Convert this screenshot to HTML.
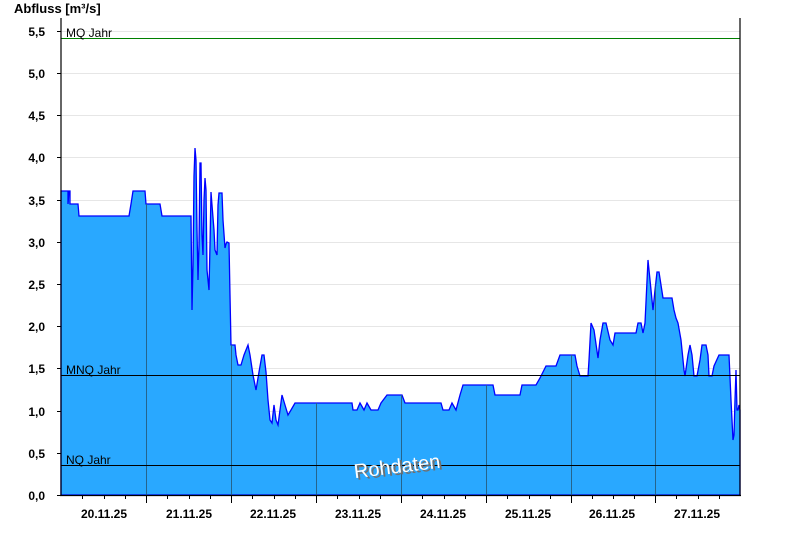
<!DOCTYPE html>
<html><head><meta charset="utf-8"><style>
html,body{margin:0;padding:0;background:#fff;width:800px;height:550px;overflow:hidden}
svg text{font-family:"Liberation Sans",Arial,sans-serif}
</style></head><body>
<svg width="800" height="550" viewBox="0 0 800 550" xmlns="http://www.w3.org/2000/svg">
<defs><clipPath id="c"><polygon id="p0" points="61,191 68,191 68,204 69,191 70,191 70,204 78,204 79,216 129,216 131,204 133,191 145,191 146,204 160,204 162,216 191,216 192,310 193,265 194,176 195,148 196,160 197,230 198,280 199,245 200,163 201,163 202,235 203,255 204,200 205,178 206,190 207,270 209,290 210,245 211,192 212,205 214,230 215,250 217,255 218,205 219,193 222,193 223,220 225,248 226,244 227,242 229,243 230,295 231,345 235,345 236,355 238,365 241,365 244,355 248,345 250,355 253,375 256,390 259,372 262,355 264,355 266,372 268,400 270,420 272,423 274,405 276,420 278,425 280,410 282,395 285,405 288,415 291,410 295,403 352,403 353,410 357,410 360,403 364,410 367,403 371,410 378,410 381,403 387,395 402,395 405,403 441,403 443,410 449,410 452,403 456,410 460,395 463,385 493,385 495,395 520,395 522,385 536,385 540,378 543,372 546,366 556,366 560,355 575,355 577,366 580,376 588,376 589,360 591,323 594,330 598,358 600,340 603,323 606,323 610,340 613,345 615,333 636,333 638,323 641,323 643,333 645,323 648,260 651,290 653,310 655,290 657,272 659,272 661,285 663,298 672,298 674,310 676,318 678,323 681,340 684,370 685,376 688,355 690,345 692,355 694,376 697,376 700,360 702,345 706,345 708,355 709,376 712,376 714,366 719,355 729,355 731,400 733,440 734,435 735,400 736,370 737,410 738,410 739,405 740,410 740,495 61,495"/></clipPath></defs>
<g stroke="#e6e6e6" stroke-width="1">
<line x1="61" y1="31.5" x2="740" y2="31.5"/><line x1="61" y1="73.5" x2="740" y2="73.5"/><line x1="61" y1="115.5" x2="740" y2="115.5"/><line x1="61" y1="157.5" x2="740" y2="157.5"/><line x1="61" y1="200.5" x2="740" y2="200.5"/><line x1="61" y1="242.5" x2="740" y2="242.5"/><line x1="61" y1="284.5" x2="740" y2="284.5"/><line x1="61" y1="326.5" x2="740" y2="326.5"/><line x1="61" y1="368.5" x2="740" y2="368.5"/><line x1="61" y1="411.5" x2="740" y2="411.5"/><line x1="61" y1="453.5" x2="740" y2="453.5"/>
</g>
<use href="#p0" fill="#29a8ff" stroke="#0000ff" stroke-width="1.3"/>
<g clip-path="url(#c)" stroke="#25648c" stroke-width="1">
<line x1="146.5" y1="0" x2="146.5" y2="495"/><line x1="231.5" y1="0" x2="231.5" y2="495"/><line x1="316.5" y1="0" x2="316.5" y2="495"/><line x1="401.5" y1="0" x2="401.5" y2="495"/><line x1="486.5" y1="0" x2="486.5" y2="495"/><line x1="571.5" y1="0" x2="571.5" y2="495"/><line x1="655.5" y1="0" x2="655.5" y2="495"/>
</g>
<line x1="61" y1="38.5" x2="740" y2="38.5" stroke="#008000"/>
<line x1="61" y1="375.5" x2="740" y2="375.5" stroke="#000"/>
<line x1="61" y1="465.5" x2="740" y2="465.5" stroke="#000"/>
<g font-size="12" fill="#000"><text x="66" y="37">MQ Jahr</text><text x="66" y="374">MNQ Jahr</text><text x="66" y="464">NQ Jahr</text></g>
<g stroke="#000" stroke-width="1.2" fill="none">
<line x1="61" y1="18" x2="61" y2="495.5"/><line x1="740" y1="18" x2="740" y2="495.5"/><line x1="60" y1="495.5" x2="741" y2="495.5"/>
</g>
<g stroke="#000" stroke-width="1">
<line x1="57" y1="31.5" x2="61" y2="31.5"/><line x1="57" y1="73.5" x2="61" y2="73.5"/><line x1="57" y1="115.5" x2="61" y2="115.5"/><line x1="57" y1="157.5" x2="61" y2="157.5"/><line x1="57" y1="200.5" x2="61" y2="200.5"/><line x1="57" y1="242.5" x2="61" y2="242.5"/><line x1="57" y1="284.5" x2="61" y2="284.5"/><line x1="57" y1="326.5" x2="61" y2="326.5"/><line x1="57" y1="368.5" x2="61" y2="368.5"/><line x1="57" y1="411.5" x2="61" y2="411.5"/><line x1="57" y1="453.5" x2="61" y2="453.5"/><line x1="57" y1="495.5" x2="61" y2="495.5"/>
</g>
<g stroke="#000" stroke-width="1" id="ticks"></g>
<g stroke="#000" stroke-width="1">
<path d="M82.5 495v4M104.5 495v4M125.5 495v4M146.5 495v8M167.5 495v4M189.5 495v4M210.5 495v4M231.5 495v8M252.5 495v4M274.5 495v4M295.5 495v4M316.5 495v8M337.5 495v4M359.5 495v4M380.5 495v4M401.5 495v8M422.5 495v4M444.5 495v4M465.5 495v4M486.5 495v8M507.5 495v4M529.5 495v4M550.5 495v4M571.5 495v8M592.5 495v4M613.5 495v4M634.5 495v4M655.5 495v8M676.5 495v4M698.5 495v4M719.5 495v4"/>
</g>
<g font-size="12" font-weight="bold" text-anchor="end" fill="#000">
<text x="45" y="36">5,5</text><text x="45" y="78">5,0</text><text x="45" y="120">4,5</text><text x="45" y="162">4,0</text><text x="45" y="205">3,5</text><text x="45" y="247">3,0</text><text x="45" y="289">2,5</text><text x="45" y="331">2,0</text><text x="45" y="373">1,5</text><text x="45" y="416">1,0</text><text x="45" y="458">0,5</text><text x="45" y="500">0,0</text>
</g>
<g font-size="12" font-weight="bold" text-anchor="middle" fill="#000">
<text x="104" y="518">20.11.25</text><text x="189" y="518">21.11.25</text><text x="273" y="518">22.11.25</text><text x="358" y="518">23.11.25</text><text x="443" y="518">24.11.25</text><text x="528" y="518">25.11.25</text><text x="612" y="518">26.11.25</text><text x="697" y="518">27.11.25</text>
</g>
<text x="14" y="13" font-size="13" font-weight="bold" fill="#000">Abfluss [m³/s]</text>
<g transform="rotate(-7 397 466)" font-size="20" text-anchor="middle">
<text x="399" y="475" fill="#707070">Rohdaten</text>
<text x="397" y="473" fill="#fff">Rohdaten</text>
</g>
</svg>
</body></html>
